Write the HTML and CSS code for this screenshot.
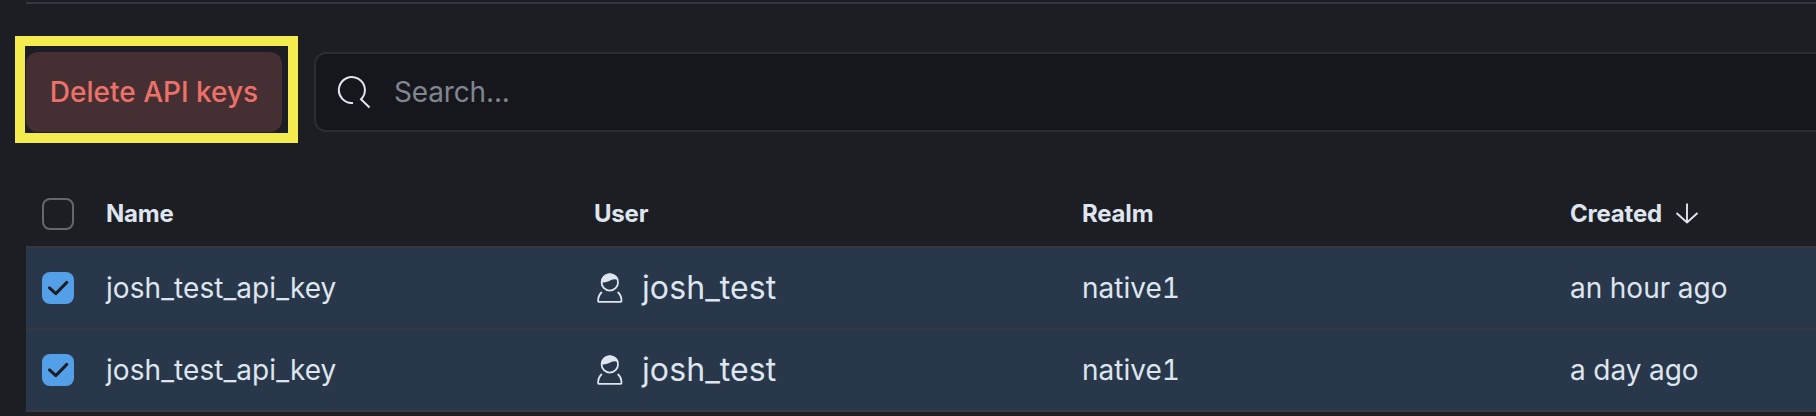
FILE: index.html
```
<!DOCTYPE html>
<html lang="en">
<head>
<meta charset="utf-8">
<title>API keys</title>
<link rel="stylesheet" href="styles.css">
</head>
<body>
<svg class="defs" width="0" height="0">
  <symbol id="user" viewBox="0.2 1.1 32 32">
    <circle cx="16" cy="11.500" r="8.200" fill="none" stroke="currentColor" stroke-width="1.800"/>
    <path d="M7.300 11.600C7 6.500 11 2.600 16 2.600c4.600 0 8.200 3 8.800 7-2.400-1.600-5-1.800-7.400-.4-3 1.800-6.200 2.800-10.100 2.400z" fill="currentColor"/>
    <path d="M7.600 21.600C5.400 23.600 4.400 26.500 4.300 30c0 .6.300.9.900.9h21.600c.6 0 .9-.3.900-.9-.1-3.500-1.100-6.400-3.300-8.400" fill="none" stroke="currentColor" stroke-width="1.800" stroke-linecap="round"/>
  </symbol>
  <symbol id="check" viewBox="0 0 32 32">
    <path d="M7.500 15.800l6.300 5.800 11-11.200" fill="none" stroke="#1d1e24" stroke-width="3" stroke-linecap="round" stroke-linejoin="round"/>
  </symbol>
</svg>
<main class="page">
  <div class="toolbar">
    <div class="action">
      <button class="delete">Delete API keys</button>
      <span class="highlight"></span>
    </div>
    <div class="search">
      <svg class="search-icon" width="34" height="34" viewBox="0 0 34 34"><path d="M16 28A13 13 0 1 1 24 24.300L32.500 32.500" fill="none" stroke="currentColor" stroke-width="2"/></svg>
      <span>Search...</span>
    </div>
  </div>
  <div class="table">
    <div class="row head">
      <div class="select"><span class="box"></span></div>
      <div class="cell">Name</div>
      <div class="cell">User</div>
      <div class="cell">Realm</div>
      <div class="cell">Created<svg class="sort" width="24" height="24" viewBox="0 0 24 24"><path d="M12 1.500v19M1.500 11L12 20.500l10.500-9.500" fill="none" stroke="currentColor" stroke-width="1.900"/></svg></div>
    </div>
    <div class="row">
      <div class="select"><span class="box checked"><svg width="32" height="32"><use href="#check"/></svg></span></div>
      <div class="cell key">josh_test_api_key</div>
      <div class="cell user"><svg width="32" height="32"><use href="#user"/></svg>josh_test</div>
      <div class="cell">native1</div>
      <div class="cell">an hour ago</div>
    </div>
    <div class="row">
      <div class="select"><span class="box checked"><svg width="32" height="32"><use href="#check"/></svg></span></div>
      <div class="cell key">josh_test_api_key</div>
      <div class="cell user"><svg width="32" height="32"><use href="#user"/></svg>josh_test</div>
      <div class="cell">native1</div>
      <div class="cell">a day ago</div>
    </div>
  </div>
</main>
</body>
</html>
```
FILE: styles.css
```
* { box-sizing: border-box; }
body {
  margin: 0;
  height: 416px;
  overflow: hidden;
  background: #1d1e24;
  color: #dfe5ef;
  font: 400 28px/48px Inter, sans-serif;
}
svg { display: block; flex: none; }
.defs { position: absolute; }
.page { padding: 2px 0 0 26px; overflow: hidden; height: 416px; }
.toolbar {
  display: flex;
  gap: 32px;
  border-top: 2px solid #343741;
  padding-top: 48px;
}
.action { position: relative; width: 256px; height: 80px; flex: none; }
.delete {
  width: 256px;
  height: 80px;
  padding: 0;
  border: 0;
  border-radius: 12px;
  background: #462f32;
  color: #ec7269;
  font: 500 28px/80px Inter, sans-serif;
}
.highlight {
  position: absolute;
  left: -11px;
  top: -16px;
  width: 283px;
  height: 107px;
  border: 10px solid #f4eb4e;
}
.search {
  flex: 1;
  display: flex;
  align-items: center;
  gap: 23px;
  height: 80px;
  padding-left: 21px;
  border: 2px solid #2c2d32;
  border-right: 0;
  border-radius: 12px 0 0 12px;
  background: #16171c;
  color: #81858f;
  letter-spacing: -0.15px;
}
.search-icon { color: #dfe5ef; }
.table { padding-top: 50px; font-variant-numeric: tabular-nums; }
.row {
  display: grid;
  grid-template-columns: 64px repeat(3, 488px) 1fr;
  align-items: center;
  height: 82px;
  border-bottom: 2px solid #36373f;
  background: #28384a;
}
.head {
  height: 66px;
  background: none;
  font-size: 24px;
  font-weight: 700;
  letter-spacing: -0.2px;
}
.select { padding-left: 16px; }
.box {
  display: block;
  width: 32px;
  height: 32px;
  border: 2px solid #65676c;
  border-radius: 8px;
}
.checked { border: 0; background: #54a0e8; }
.cell { display: flex; align-items: center; padding-left: 16px; white-space: nowrap; }
.key { letter-spacing: 0.07px; }
.sort { margin-left: 13px; }
.user { gap: 16px; font-size: 32px; letter-spacing: 0.1px; }
```
